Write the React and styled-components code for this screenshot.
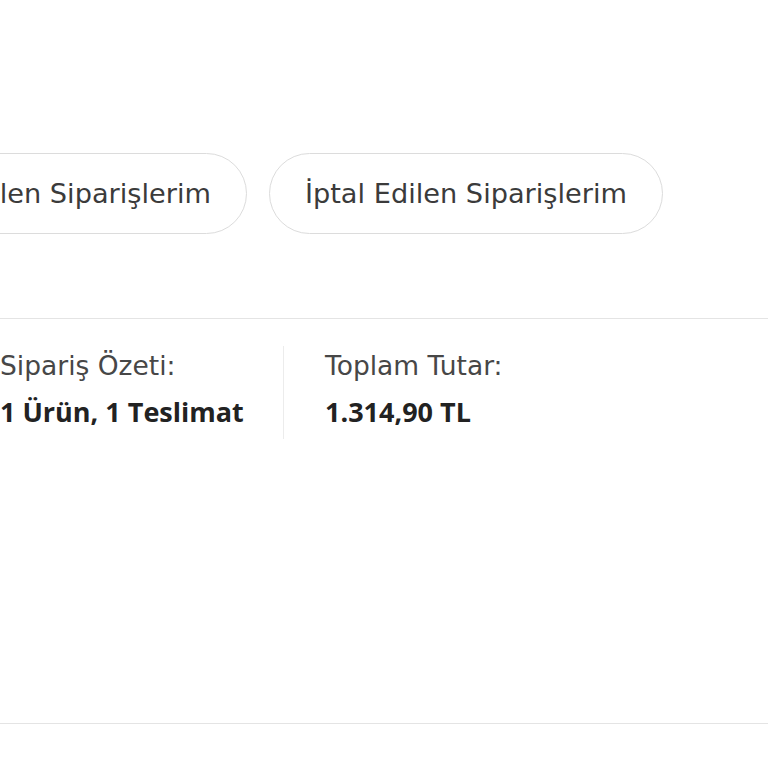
import React from 'react';
import styled, { createGlobalStyle } from 'styled-components';

const GlobalStyle = createGlobalStyle`
  html, body {
    margin: 0;
    padding: 0;
    background: #fff;
    overflow: hidden;
  }
  body {
    font-family: "DejaVu Sans", "Liberation Sans", sans-serif;
    color: #333;
  }
`;

const Page = styled.div`
  width: 768px;
  height: 768px;
  overflow: hidden;
`;

const Tabs = styled.div`
  width: 663px;
  margin-top: 153px;
  display: flex;
  justify-content: flex-end;
  gap: 22px;
`;

const Tab = styled.button`
  flex-shrink: 0;
  height: 81px;
  padding: 0 35px;
  border: 1.5px solid #dcdcdc;
  border-radius: 41px;
  background: #fff;
  font-family: inherit;
  font-size: 27.2px;
  color: #3b3b3b;
  white-space: nowrap;
`;

const Rule = styled.div`
  height: 1px;
  background: #e4e4e4;
  margin-top: ${p => p.$top}px;
`;

const Summary = styled.div`
  display: flex;
  margin-top: 27px;
  height: 93px;
`;

const Col = styled.div`
  display: flex;
  flex-direction: column;
  width: ${p => p.$w || 'auto'};
  padding-left: ${p => p.$pad || 0}px;
  border-right: ${p => (p.$divider ? '1px solid #ececec' : 'none')};
`;

const Label = styled.span`
  font-size: 26.5px;
  color: #474747;
  margin-top: 3px;
  line-height: 34px;
`;

const Value = styled.span`
  font-family: "Open Sans", "Liberation Sans", sans-serif;
  font-size: 27px;
  font-weight: 700;
  color: #222;
  margin-top: 12px;
  line-height: 34px;
`;

export default function App() {
  return (
    <Page>
      <GlobalStyle />
      <Tabs>
        <Tab>Teslim Edilen Siparişlerim</Tab>
        <Tab>İptal Edilen Siparişlerim</Tab>
      </Tabs>
      <Rule $top={84} />
      <Summary>
        <Col $w="283px" $divider>
          <Label>Sipariş Özeti:</Label>
          <Value>1 Ürün, 1 Teslimat</Value>
        </Col>
        <Col $pad={41}>
          <Label>Toplam Tutar:</Label>
          <Value>1.314,90 TL</Value>
        </Col>
      </Summary>
      <Rule $top={284} />
    </Page>
  );
}
